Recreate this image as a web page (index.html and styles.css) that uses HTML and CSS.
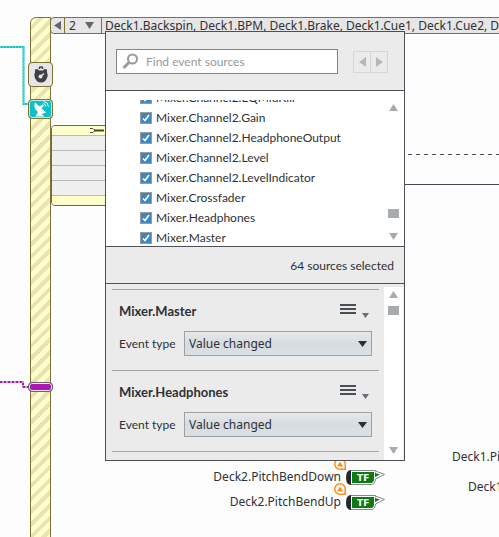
FILE: index.html
```
<!DOCTYPE html>
<html lang="en">
<head>
<meta charset="utf-8">
<title>Event sources</title>
<link rel="stylesheet" href="styles.css">
</head>
<body>
<svg class="defs" aria-hidden="true">
  <g id="tf">
    <path d="M5 1.500H29.500V4L38.500 5L29.500 9.500Q29 15.500 25.500 15.500H5Z" fill="#fff"/>
    <path d="M5 1.500H29.500V4M29.500 10Q29 15.500 25.500 15.500H5" fill="none" stroke="#858885"/>
    <path d="M5 1Q0 1 0 8.500T5 16Z" fill="#25282a"/>
    <path d="M6 3H28V10Q28 14 25 14H6Z" fill="#0e7a12"/>
    <path d="M29.500 2L38.500 5.500L29.500 10" fill="#fff" stroke="#858885"/>
    <path d="M29 4L34 5.500L29 8Z" fill="#0e7a12"/>
  </g>
  <g id="badge">
    <path d="M6 .750H6A5.250 5.250 0 0 0 6 11.250H11.250V6A5.250 5.250 0 0 0 6 .750Z" fill="#fff" stroke="#fb8c14" stroke-width="1.500"/>
    <path d="M6 3.500L9 8.500H3Z" fill="#fb8c14"/>
  </g>
</svg>
<main class="canvas">
  <svg class="wires" aria-hidden="true">
    <g fill="none">
      <path d="M0 47H23.500V104H29" stroke="#14c4c8" stroke-width="2"/>
      <path d="M0 47H23.500V104H29" stroke="#a5eaea" stroke-width="1" stroke-dasharray="1 2"/>
      <path d="M0 382H23V387H29" stroke="#d98fdc" stroke-width="2"/>
      <path d="M0 382H23V387H29" stroke="#a81ab0" stroke-width="2" stroke-dasharray="2 2"/>
      <path d="M408 154.500H2000" stroke="#454852" stroke-dasharray="4 4"/>
      <path d="M400 184.500H2000" stroke="#454852"/>
    </g>
  </svg>

  <div class="lane"></div>

  <header class="case-bar">
    <button class="case-prev" aria-label="Previous case"><svg width="7" height="9"><path d="M7 0V9L0 4.500Z" fill="#66666a"/></svg></button>
    <button class="case-pick"><span>2</span><svg width="9" height="7"><path d="M0 0H9L4.500 7Z" fill="#66666a"/></svg></button>
    <div class="case-label">Deck1.Backspin, Deck1.BPM, Deck1.Brake, Deck1.Cue1, Deck1.Cue2, Deck1.Cue3</div>
  </header>

  <div class="terminal timer">
    <svg width="22" height="22" viewBox="0 0 22 22"><path d="M9.500 5V3.500Q9.500 3 11 3T12.500 3.500V5" fill="none" stroke="#3f4044" stroke-width="1.500"/><path d="M5 5.500L7.500 5L9 6.500H13L14.500 5L17 5.500V8.500Q18 10 17.500 12.500Q16 18.500 11 18.500T4.500 12.500Q4 10 5 8.500Z" fill="#3f4044"/><path d="M10.500 12.500L14 9.500" stroke="#e6e6e6" stroke-width="1.500"/><circle cx="10.500" cy="12.500" r="2" fill="#e6e6e6"/></svg>
  </div>
  <div class="terminal radar">
    <svg width="22" height="17" viewBox="0 0 22 17"><path d="M5 1.500L9.500 5.500L12.500 3.500L14 5L11.500 7.500L16 11.500Q14 13 11 12.500L14.500 15.500H5.500L8 11Q3 7 5 1.500Z" fill="#fff"/><path d="M13 2.500q2.500 .5 3 3M13.500 .5q4.500 .5 5 5" fill="none" stroke="#d8ffff"/></svg>
  </div>
  <div class="terminal data"></div>

  <section class="node">
    <div class="node-head"><svg width="14" height="7"><path d="M0 1.500H3L5 3.500L3 5.500H0" fill="none" stroke="#55534a"/><path d="M4 3.500H14" stroke="#45443c" stroke-width="2"/></svg></div>
    <div class="node-row"></div><div class="node-row"></div><div class="node-row"></div><div class="node-row"></div>
    <div class="node-foot"></div>
  </section>

  <div class="output out-down">
    <svg class="badge" width="12" height="12"><use href="#badge"/></svg>
    <span>Deck2.PitchBendDown</span>
    <svg width="40" height="17"><use href="#tf"/><text class="tf" x="11" y="12">TF</text></svg>
  </div>
  <div class="output out-up">
    <svg class="badge" width="12" height="12"><use href="#badge"/></svg>
    <span>Deck2.PitchBendUp</span>
    <svg width="40" height="17"><use href="#tf"/><text class="tf" x="11" y="12">TF</text></svg>
  </div>
  <span class="label label-a">Deck1.PitchBendDown</span>
  <span class="label label-b">Deck1.PitchBendUp</span>

  <section class="popup">
    <form class="search">
      <label class="search-box">
        <svg width="17" height="17"><circle cx="10.500" cy="6" r="4.500" fill="none" stroke="#999" stroke-width="2"/><path d="M7 9.500L1.500 15" stroke="#999" stroke-width="3"/></svg>
        <input type="text" placeholder="Find event sources" aria-label="Find event sources">
      </label>
      <div class="steps">
        <button type="button" disabled aria-label="Previous match"><svg width="7" height="10"><path d="M7 0V10L0 5Z" fill="#b5b8ba"/></svg></button>
        <button type="button" disabled aria-label="Next match"><svg width="7" height="10"><path d="M0 0V10L7 5Z" fill="#b5b8ba"/></svg></button>
      </div>
    </form>

    <div class="list">
      <div class="rows">
        <label><input type="checkbox" checked>Mixer.Channel2.EQMidKill</label>
        <label><input type="checkbox" checked>Mixer.Channel2.Gain</label>
        <label><input type="checkbox" checked>Mixer.Channel2.HeadphoneOutput</label>
        <label><input type="checkbox" checked>Mixer.Channel2.Level</label>
        <label><input type="checkbox" checked>Mixer.Channel2.LevelIndicator</label>
        <label><input type="checkbox" checked>Mixer.Crossfader</label>
        <label><input type="checkbox" checked>Mixer.Headphones</label>
        <label><input type="checkbox" checked>Mixer.Master</label>
      </div>
      <div class="scroll scroll-end">
        <svg width="9" height="7"><path d="M0 7H9L4.500 0Z" fill="#a9acaf"/></svg>
        <i></i>
        <svg width="9" height="7"><path d="M0 0H9L4.500 7Z" fill="#a9acaf"/></svg>
      </div>
    </div>

    <div class="summary">64 sources selected</div>

    <div class="config">
      <div class="cards">
        <section class="card">
          <div class="card-head"><h2>Mixer.Master</h2><button class="menu" aria-label="Mixer.Master menu"><svg width="30" height="14"><path d="M0 1H16M0 5H16M0 9H16" stroke="#4a4e56" stroke-width="2"/><path d="M22 9H29L25.500 14Z" fill="#6b6e74"/></svg></button></div>
          <div class="field"><label for="type-master">Event type</label><span class="pick"><select id="type-master"><option>Value changed</option></select><svg width="9" height="6"><path d="M0 0H9L4.500 6Z" fill="#2b2d30"/></svg></span></div>
        </section>
        <section class="card">
          <div class="card-head"><h2>Mixer.Headphones</h2><button class="menu" aria-label="Mixer.Headphones menu"><svg width="30" height="14"><path d="M0 1H16M0 5H16M0 9H16" stroke="#4a4e56" stroke-width="2"/><path d="M22 9H29L25.500 14Z" fill="#6b6e74"/></svg></button></div>
          <div class="field"><label for="type-phones">Event type</label><span class="pick"><select id="type-phones"><option>Value changed</option></select><svg width="9" height="6"><path d="M0 0H9L4.500 6Z" fill="#2b2d30"/></svg></span></div>
        </section>
        <section class="card"></section>
      </div>
      <div class="scroll scroll-start">
        <svg width="9" height="7"><path d="M0 7H9L4.500 0Z" fill="#a9acaf"/></svg>
        <i></i>
        <svg width="9" height="7"><path d="M0 0H9L4.500 7Z" fill="#a9acaf"/></svg>
      </div>
    </div>
  </section>
</main>
</body>
</html>
```
FILE: styles.css
```
* { box-sizing: border-box; }
body { margin: 0; background: #fdfdfd; font: 12px/20px "Noto Sans", sans-serif; color: #2f3136; }
button { padding: 0; border: 0; background: none; font: inherit; color: inherit; }
svg { display: block; flex: none; }
.defs { position: absolute; width: 0; height: 0; }

.canvas { position: relative; height: 100vh; overflow: hidden; }
.wires { position: absolute; inset: 0; width: 100%; height: 100%; }
.lane {
  position: absolute; left: 30px; top: 17px; bottom: -10px; width: 21px;
  border: 1px solid #7f7235; border-radius: 6px 0 0 0;
  background: repeating-linear-gradient(135deg, #ffffcc 0 5px, #e8e3b0 5px 9px);
}
.case-bar {
  position: absolute; left: 50px; right: -10px; top: 17px; height: 17px; display: flex;
  border: 1px solid #7f7235; border-radius: 4px 0 0 4px; background: #e6e6e6;
  font: 12px/15px "Noto Sans", sans-serif;
}
.case-prev { flex: none; width: 13px; display: grid; place-items: center; }
.case-pick { flex: none; width: 38px; padding: 0 7px 0 4px; display: flex; align-items: center; justify-content: space-between; border: solid #7f7235; border-width: 0 1px; }
.case-label { padding-left: 3px; white-space: nowrap; }

.terminal { position: absolute; left: 28px; width: 25px; border: 1px solid #7f7235; border-radius: 4px; display: grid; place-items: center; }
.timer { top: 62px; height: 25px; background: #e6e6e6; }
.radar { top: 99px; height: 20px; background: #10c0c8; box-shadow: inset 0 0 0 1px #b6ecec; }
.data { top: 382px; height: 10px; border-color: #666; background: #a81ab0; box-shadow: inset 0 0 0 1px #f0e0f0; }

.node { position: absolute; left: 51px; top: 125px; width: 80px; border: 1px solid #66676b; border-radius: 4px; background: #f0f0f0; overflow: hidden; }
.node-head { height: 9px; background: #ffffcc; padding: 1px 0 0 38px; }
.node-row { height: 15px; border-top: 1px solid #b9b9b9; }
.node-foot { height: 10px; border-top: 1px solid #b9b9b9; background: #ffffcc; }

.output { position: absolute; right: 113px; display: flex; align-items: center; gap: 5px; line-height: 18px; }
.out-down { top: 468px; }
.out-up { top: 493px; }
.badge { position: absolute; right: 40px; top: -10px; }
.tf { font: bold 9px "DejaVu Sans", sans-serif; fill: #fff; }
.label { position: absolute; white-space: nowrap; }
.label-a { left: 452px; top: 447px; }
.label-b { left: 468px; top: 477px; }

.popup { position: absolute; left: 105px; top: 31px; width: 300px; border: 1px solid #4b4f57; background: #ebebeb; font: 12px/20px Lato, sans-serif; }
.search { display: flex; align-items: center; padding: 17px 16px 16px 10px; border-bottom: 1px solid #4b4f57; }
.search-box { flex: 1; height: 25px; display: flex; align-items: center; gap: 7px; padding-left: 5px; border: 1px solid #7f8689; background: #fff; }
.search-box input { flex: 1; min-width: 0; padding: 0; border: 0; outline: 0; background: none; font: inherit; }
.search-box input::placeholder { color: #999; opacity: 1; }
.steps { display: flex; margin-left: 15px; }
.steps button { width: 18px; height: 22px; display: grid; place-items: center; border: 1px solid #d6d6d6; }
.steps button + button { margin-left: -1px; }

.list { display: flex; height: 155px; padding: 9px 1px 0 0; background: #fff; }
.rows { flex: 1; overflow: hidden; padding-left: 34px; }
.rows label { display: flex; align-items: center; gap: 4px; height: 20px; }
.rows label:first-child { margin-top: -12px; }
.rows input {
  appearance: none; width: 12px; height: 12px; margin: 0; border: 1px solid #9a9a9a;
  background: #3f86bf url("data:image/svg+xml,%3Csvg xmlns='http://www.w3.org/2000/svg' viewBox='0 0 10 10'%3E%3Cpath d='M2 5.500L4 7.500L8 2' fill='none' stroke='white' stroke-width='1.600'/%3E%3C/svg%3E");
}
.scroll { width: 19px; display: flex; flex-direction: column; align-items: center; background: #fff; padding: 4px 0 6px; }
.scroll i { width: 11px; height: 9px; background: #a9acaf; }
.scroll-end i { margin: auto 0 15px; }
.scroll-start i { margin: 8px 0 auto; }

.summary { height: 38px; padding: 9px 10px; text-align: right; border: solid #4b4f57; border-width: 1px 0; }

.config { display: flex; height: 176px; padding: 3px 1px 0 0; }
.cards { flex: 1; overflow: hidden; padding: 2px 5px 0 6px; }
.card { height: 81px; border-top: 1px solid #a6a6a6; padding: 10px 7px; }
.card-head { display: flex; justify-content: space-between; height: 22px; }
h2 { margin: 0; font-size: 13px; line-height: 22px; font-weight: 700; }
.menu { width: 32px; height: 14px; margin-top: 4px; }
.field { display: flex; align-items: center; justify-content: space-between; margin-top: 9px; }
.pick { position: relative; width: 188px; height: 25px; }
.pick select { appearance: none; width: 100%; height: 100%; padding: 0 4px; border: 1px solid #9da1a4; border-radius: 0; background: linear-gradient(#e6e9eb, #d6dce0 50%, #dae0e3); font: 12px "Noto Sans", sans-serif; color: inherit; }
.pick svg { position: absolute; right: 5px; top: 10px; pointer-events: none; }
```
